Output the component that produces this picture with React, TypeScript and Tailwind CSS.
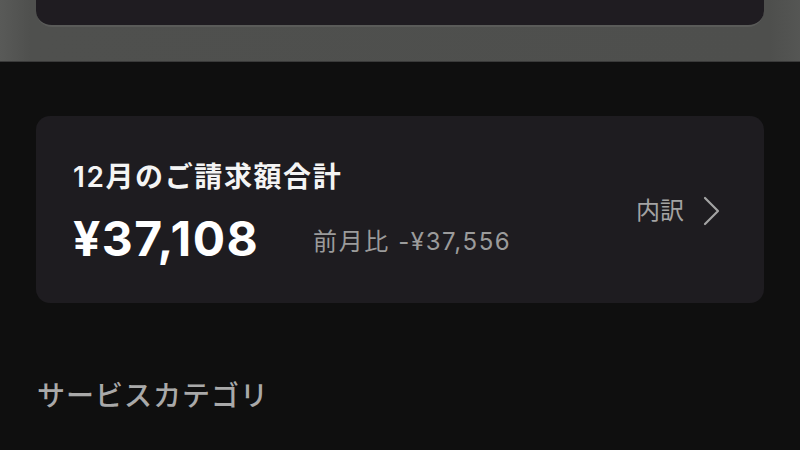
import React from "react";

const jp = {
  fontFamily: 'Inter, "Noto Sans CJK JP", "Noto Sans", sans-serif',
};

const SummaryCard = () => {
  return (
    <section className="rounded-[14px] bg-[#1e1c20] h-[187px] pl-[37px] pr-[44px] flex items-center justify-between">
      <div className="flex flex-col pt-[4px]">
        <h2 className="text-[28px] leading-[34px] font-semibold text-[#f4f4f4] tracking-[1.6px]">
          12月のご請求額合計
        </h2>
        <div className="flex items-baseline mt-[17px] relative top-[3px]">
          <span className="text-[48px] leading-[50px] font-bold text-white tracking-[1.4px]">
            ¥37,108
          </span>
          <span className="ml-[54px] text-[24px] text-[#9b9b9b] tracking-[1.6px] relative top-[-6px]">
            前月比 -¥37,556
          </span>
        </div>
      </div>
      <button className="flex items-center gap-[19px] text-[24px] text-[#a3a3a3] mt-[2px]">
        <span>内訳</span>
        <svg width="17" height="30" viewBox="0 0 17 30" fill="none">
          <path
            d="M2 2 L15 15 L2 28"
            stroke="#a3a3a3"
            strokeWidth="2.2"
            strokeLinecap="round"
            strokeLinejoin="round"
          />
        </svg>
      </button>
    </section>
  );
};

const App = () => {
  return (
    <div className="w-[800px] h-[450px] overflow-hidden bg-[#0f0f0f]" style={jp}>
      <div className="h-[62px] bg-[linear-gradient(90deg,#595a58_0px,#4f504e_30px,#4e4f4d_770px,#555654_800px)] px-[36px] border-b border-[#3a3a3a]">
        <div className="h-[27px] bg-[#1f1c21] rounded-b-[16px] border-b-2 border-[#5a5b59]" />
      </div>
      <div className="px-[36px] pt-[54px]">
        <SummaryCard />
        <h3 className="mt-[76px] ml-[1px] text-[28px] leading-[34px] font-medium text-[#a9a9a9] tracking-[1px]">
          サービスカテゴリ
        </h3>
      </div>
    </div>
  );
};

export default App;
